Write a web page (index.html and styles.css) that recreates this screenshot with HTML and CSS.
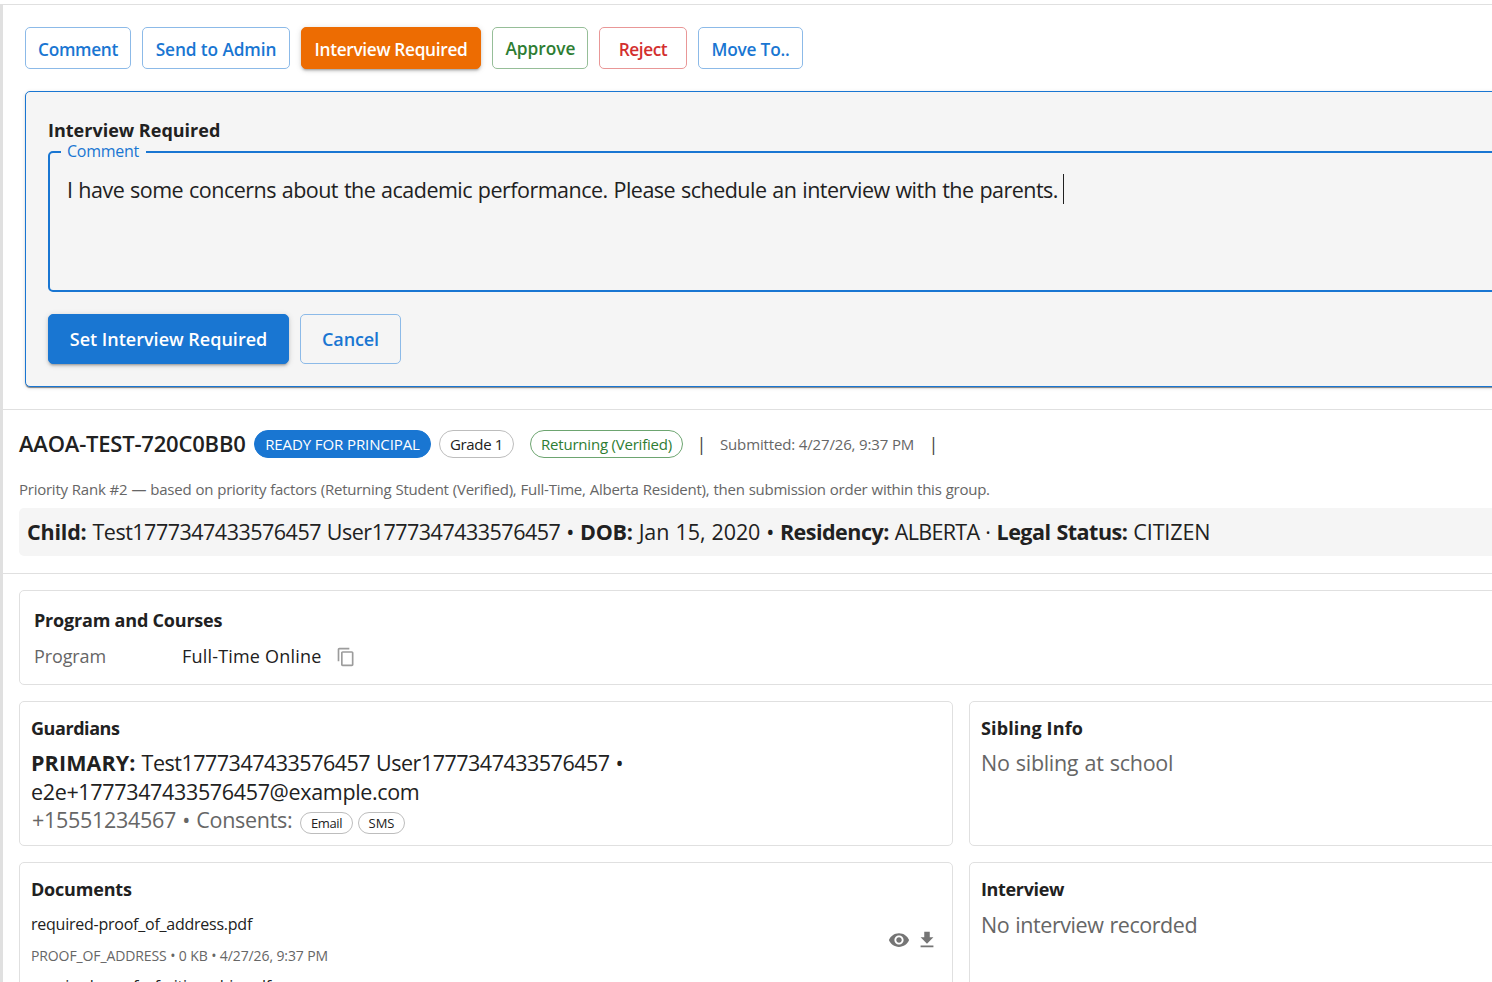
FILE: index.html
```
<!DOCTYPE html>
<html lang="en">
<head>
    <meta charset="UTF-8">
    <meta name="viewport" content="width=device-width, initial-scale=1.0">
    <title>Application Review</title>
    <link rel="stylesheet" href="styles.css">
</head>
<body>
    <div class="page">
        <section class="actions">
            <div class="btn-row">
                <button class="btn btn-comment">Comment</button>
                <button class="btn btn-send">Send to Admin</button>
                <button class="btn btn-interview">Interview Required</button>
                <button class="btn btn-approve">Approve</button>
                <button class="btn btn-reject">Reject</button>
                <button class="btn btn-move">Move To..</button>
            </div>

            <div class="panel">
                <h3 class="panel-title">Interview Required</h3>
                <div class="field">
                    <label class="field-label">Comment</label>
                    <div class="field-text">I have some concerns about the academic performance. Please schedule an interview with the parents.</div>
                    <span class="caret"></span>
                </div>
                <div class="btn-row panel-buttons">
                    <button class="btn btn-submit">Set Interview Required</button>
                    <button class="btn btn-cancel">Cancel</button>
                </div>
            </div>
        </section>

        <section class="summary">
            <div class="summary-head">
                <h2 class="app-id">AAOA-TEST-720C0BB0</h2>
                <span class="chip chip-status">READY FOR PRINCIPAL</span>
                <span class="chip chip-grade">Grade 1</span>
                <span class="chip chip-returning">Returning (Verified)</span>
                <span class="pipe">|</span>
                <span class="submitted">Submitted: 4/27/26, 9:37 PM</span>
                <span class="pipe">|</span>
            </div>
            <p class="rank">Priority Rank #2 — based on priority factors (Returning Student (Verified), Full-Time, Alberta Resident), then submission order within this group.</p>
            <div class="child-bar">
                <b>Child:</b> <span class="child-name">Test1777347433576457 User1777347433576457</span> • <b>DOB:</b> <span class="dob">Jan 15, 2020</span> • <b class="tight">Residency:</b> <span class="residency">ALBERTA</span> · <b class="tight">Legal Status:</b> <span class="dob">CITIZEN</span>
            </div>
        </section>

        <section class="details">
            <div class="card card-program">
                <h3 class="card-title">Program and Courses</h3>
                <div class="program-row">
                    <span class="program-label">Program</span>
                    <span class="program-value">Full-Time Online</span>
                    <svg class="icon-copy" viewBox="0 0 24 24"><path d="M16 1H4c-1.1 0-2 .9-2 2v14h2V3h12V1zm3 4H8c-1.1 0-2 .9-2 2v14c0 1.1.9 2 2 2h11c1.1 0 2-.9 2-2V7c0-1.1-.9-2-2-2zm0 16H8V7h11v14z"/></svg>
                </div>
            </div>

            <div class="card-grid">
                <div class="card">
                    <h3 class="card-title title-guardians">Guardians</h3>
                    <div class="body-text guardian"><b>PRIMARY:</b> Test1777347433576457 User1777347433576457 •</div>
                    <div class="body-text email">e2e+1777347433576457@example.com</div>
                    <div class="consents">
                        <span class="body-text muted phone">+15551234567 • Consents:</span>
                        <span class="chip-small chip-email">Email</span>
                        <span class="chip-small">SMS</span>
                    </div>
                </div>
                <div class="card">
                    <h3 class="card-title title-sibling">Sibling Info</h3>
                    <div class="body-text muted sibling">No sibling at school</div>
                </div>
                <div class="card card-tall">
                    <h3 class="card-title">Documents</h3>
                    <div class="doc">
                        <div>
                            <div class="doc-name">required-proof_of_address.pdf</div>
                            <div class="doc-meta">PROOF_OF_ADDRESS • 0 KB • 4/27/26, 9:37 PM</div>
                        </div>
                        <div class="doc-icons">
                            <svg class="icon" viewBox="0 0 24 24"><path d="M12 4.5C7 4.5 2.73 7.61 1 12c1.73 4.39 6 7.5 11 7.5s9.27-3.11 11-7.5c-1.73-4.39-6-7.5-11-7.5zM12 17c-2.76 0-5-2.24-5-5s2.24-5 5-5 5 2.24 5 5-2.24 5-5 5zm0-8c-1.66 0-3 1.34-3 3s1.34 3 3 3 3-1.34 3-3-1.34-3-3-3z"/></svg>
                            <svg class="icon" viewBox="0 0 24 24"><path d="M19 9h-4V3H9v6H5l7 7 7-7zM5 18v2h14v-2H5z"/></svg>
                        </div>
                    </div>
                    <div class="doc">
                        <div>
                            <div class="doc-name">required-proof_of_citizenship.pdf</div>
                        </div>
                    </div>
                </div>
                <div class="card card-tall">
                    <h3 class="card-title title-interview">Interview</h3>
                    <div class="body-text muted interview">No interview recorded</div>
                </div>
            </div>
        </section>
    </div>
</body>
</html>
```
FILE: styles.css
```
* { box-sizing: border-box; }
html, body {
    height: 100%;
    margin: 0;
    overflow: hidden;
}
body {
    font-family: "Open Sans", "Noto Sans", sans-serif;
    color: #212121;
    background: #fff;
    padding-top: 4px;
    white-space: nowrap;
}
h2, h3, p { margin: 0; }
b { font-weight: 700; }

/* wider than the window, runs off to the right */
.page {
    width: 1919px;
    min-height: 100%;
    border-top: 1px solid #e0e0e0;
    border-left: 3px solid #e0e0e0;
}

/* action buttons */
.actions {
    padding: 22px;
    border-bottom: 1px solid #e0e0e0;
}
.btn-row {
    display: flex;
    gap: 11px;
}
.btn {
    height: 42px;
    padding: 4px 0 0;
    font-family: inherit;
    font-size: 17.3px;
    font-weight: 600;
    line-height: 24px;
    color: #1976d2;
    background: transparent;
    border: 1px solid #8cbae8;
    border-radius: 5px;
    white-space: nowrap;
}
.btn-comment { width: 106px; letter-spacing: -0.34px; }
.btn-send { width: 148px; letter-spacing: -0.1px; }
.btn-interview {
    width: 180px;
    letter-spacing: -0.33px;
    color: #fff;
    background: #ed6c02;
    border-color: #ed6c02;
    box-shadow: 0 3px 2px -2px rgba(0,0,0,.2), 0 2px 3px rgba(0,0,0,.14), 0 1px 6px rgba(0,0,0,.12);
}
.btn-approve {
    width: 96px;
    padding: 2px 0 0 1px;
    color: #2e7d32;
    border-color: #96be98;
}
.btn-reject {
    width: 88px;
    letter-spacing: -0.44px;
    color: #d32f2f;
    border-color: #e99797;
}
.btn-move { width: 105px; letter-spacing: -0.2px; }

/* comment panel */
.panel {
    margin-top: 22px;
    padding: 22px;
    background: #f5f5f5;
    border: 1px solid #1976d2;
    border-radius: 5px;
    box-shadow: 0 2px 1px -1px rgba(0,0,0,.3), 0 1px 1px rgba(0,0,0,.2), 0 1px 4px rgba(0,0,0,.12);
}
.panel-title {
    font-size: 18px;
    font-weight: 700;
    line-height: 32px;
}
.field {
    position: relative;
    display: flex;
    height: 141px;
    margin-top: 5px;
    padding: 22px 17px;
    border: 2px solid #1976d2;
    border-radius: 5px;
}
.field-label {
    position: absolute;
    top: -14px;
    left: 11px;
    padding: 0 7px 0 6px;
    font-size: 16px;
    line-height: 24px;
    letter-spacing: -0.26px;
    color: #1976d2;
    background: #f5f5f5;
}
.field-text {
    font-size: 21.5px;
    line-height: 29px;
    letter-spacing: -0.52px;
    word-spacing: 0.8px;
}
.caret {
    width: 1px;
    height: 30px;
    margin: -1px 0 0 5px;
    background: #212121;
}
.panel-buttons { margin-top: 22px; }
.panel-buttons .btn { height: 50px; padding-top: 0; font-size: 18px; }
.btn-submit {
    width: 241px;
    color: #fff;
    background: #1976d2;
    border-color: #1976d2;
    box-shadow: 0 3px 2px -2px rgba(0,0,0,.2), 0 2px 3px rgba(0,0,0,.14), 0 1px 6px rgba(0,0,0,.12);
}
.btn-cancel { width: 101px; letter-spacing: -0.1px; }

/* application summary */
.summary {
    padding: 20px 16px 17px;
    border-bottom: 1px solid #e0e0e0;
}
.summary-head {
    display: flex;
    align-items: center;
    height: 28px;
}
.app-id {
    width: 235px;
    padding-bottom: 2px;
    font-size: 22px;
    font-weight: 600;
    line-height: 28px;
    letter-spacing: -0.2px;
}
.chip {
    height: 28px;
    font-size: 15px;
    line-height: 27px;
    text-align: center;
    border: 1px solid #bdbdbd;
    border-radius: 14px;
}
.chip-status {
    width: 177px;
    letter-spacing: -0.1px;
    color: #fff;
    background: #1976d2;
    border-color: #1976d2;
}
.chip-grade { width: 75px; margin-left: 8px; letter-spacing: -0.35px; }
.chip-returning {
    width: 153px;
    margin-left: 16px;
    letter-spacing: -0.21px;
    color: #2e7d32;
    border-color: #6da570;
}
.pipe {
    width: 37px;
    font-size: 18px;
    text-align: center;
    color: #444;
}
.submitted {
    width: 195px;
    font-size: 15px;
    letter-spacing: -0.15px;
    color: #666;
}
.rank {
    margin-top: 20px;
    font-size: 15px;
    line-height: 22px;
    letter-spacing: -0.25px;
    word-spacing: 0.45px;
    color: #666;
}
.child-bar {
    height: 48px;
    margin-top: 8px;
    padding-left: 8px;
    font-size: 21.5px;
    line-height: 48px;
    letter-spacing: -0.42px;
    word-spacing: 0.8px;
    background: #f5f5f5;
    border-radius: 5px;
}
.child-bar b { letter-spacing: -0.2px; }
.child-bar .tight { letter-spacing: -0.5px; }
.child-name { letter-spacing: -0.5px; }
.dob { letter-spacing: -0.12px; }
.residency { letter-spacing: -0.7px; }

/* cards */
.details { padding: 16px; }
.card {
    padding: 11px;
    border: 1px solid #e0e0e0;
    border-radius: 5px;
}
.card-title {
    font-size: 18px;
    font-weight: 700;
    line-height: 30px;
    letter-spacing: -0.2px;
}
.title-guardians { letter-spacing: -0.44px; }
.title-sibling { letter-spacing: 0.14px; }
.title-interview { letter-spacing: -0.35px; }
.card-program { height: 95px; padding: 14px; }
.program-row {
    display: flex;
    align-items: center;
    height: 30px;
    margin-top: 6px;
    font-size: 18px;
}
.program-label { width: 148px; letter-spacing: -0.12px; color: #666; }
.program-value { width: 154px; letter-spacing: 0.19px; }
.icon-copy { width: 20px; height: 20px; margin-top: 1px; fill: #9c9c9c; }

.card-grid {
    display: grid;
    grid-template-columns: 934px 934px;
    grid-template-rows: 145px 300px;
    gap: 16px;
    margin-top: 16px;
}
.body-text {
    font-size: 21.5px;
    line-height: 29px;
}
.card-title + .body-text { margin-top: 5px; }
.card-tall .card-title + .body-text { margin-top: 6px; }
.muted { color: #666; }
.guardian { letter-spacing: -0.5px; word-spacing: 0.9px; }
.guardian b { letter-spacing: 0.12px; }
.email { letter-spacing: -0.34px; }
.sibling { letter-spacing: -0.3px; word-spacing: 1px; }
.interview { letter-spacing: -0.45px; word-spacing: 1px; }
.consents {
    display: flex;
    align-items: center;
    height: 28px;
}
.phone {
    width: 269px;
    padding: 0 0 2px 1px;
    letter-spacing: -0.3px;
    word-spacing: 1px;
}
.chip-small {
    width: 47px;
    height: 22px;
    margin-top: 6px;
    font-size: 13px;
    line-height: 20px;
    text-align: center;
    border: 1px solid #bdbdbd;
    border-radius: 11px;
}
.chip-email { width: 53px; margin-right: 5px; letter-spacing: -0.4px; }

.doc {
    display: flex;
    justify-content: space-between;
    height: 62px;
    padding-right: 3px;
}
.card-title + .doc { margin-top: 6px; }
.doc-name {
    font-size: 16px;
    line-height: 28px;
    letter-spacing: -0.24px;
}
.doc-meta {
    margin-top: 6px;
    font-size: 14px;
    line-height: 24px;
    letter-spacing: -0.11px;
    color: #666;
}
.doc-icons {
    display: flex;
    align-items: center;
    gap: 6px;
    height: 60px;
}
.icon { width: 22px; height: 22px; fill: #757575; }
```
